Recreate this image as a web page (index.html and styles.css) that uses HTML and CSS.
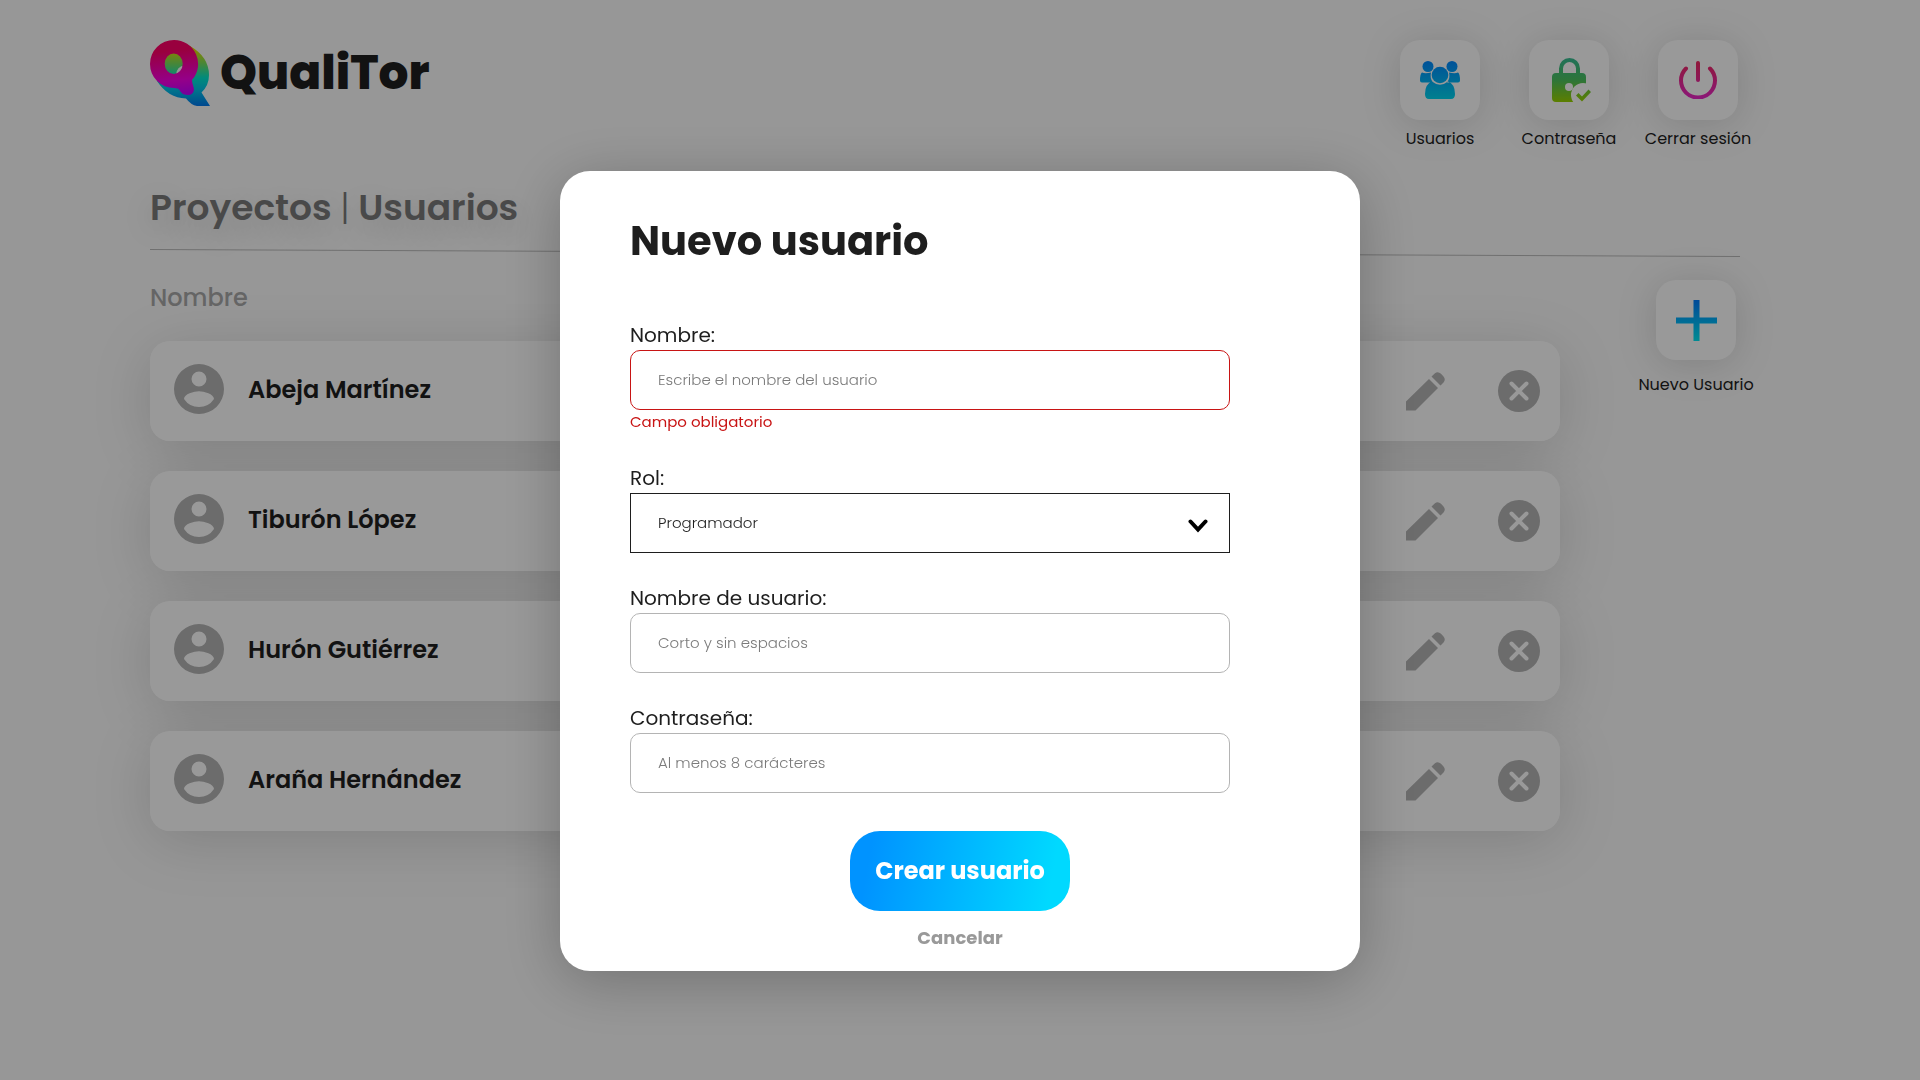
FILE: index.html
```html
<!DOCTYPE html>
<html lang="es">
<head>
<meta charset="utf-8">
<meta name="viewport" content="width=device-width, initial-scale=1">
<title>QualiTor | Nuevo usuario</title>
<link rel="stylesheet" href="styles.css">
</head>
<body>
<svg class="defs" width="0" height="0" aria-hidden="true">
  <defs>
    <linearGradient id="users-blue" gradientUnits="userSpaceOnUse" x1="0" y1="0" x2="0" y2="38"><stop offset="0" stop-color="#0088ff"/><stop offset="1" stop-color="#00d5ef"/></linearGradient>
    <linearGradient id="plus-blue" gradientUnits="userSpaceOnUse" x1="0" y1="0" x2="0" y2="41"><stop offset="0" stop-color="#007cff"/><stop offset="1" stop-color="#00e8f5"/></linearGradient>
    <linearGradient id="green" gradientUnits="userSpaceOnUse" x1="0" y1="0" x2="0" y2="44"><stop offset="0" stop-color="#38bd94"/><stop offset=".5" stop-color="#4cc360"/><stop offset="1" stop-color="#9ad300"/></linearGradient>
    <linearGradient id="pink" gradientUnits="userSpaceOnUse" x1="0" y1="0" x2="0" y2="38"><stop offset="0" stop-color="#ef2860"/><stop offset="1" stop-color="#e827c8"/></linearGradient>
    <linearGradient id="logo-front" gradientUnits="userSpaceOnUse" x1="20" y1="0" x2="26" y2="54"><stop offset=".2" stop-color="#ff0068"/><stop offset=".75" stop-color="#f800e4"/><stop offset="1" stop-color="#c800ff"/></linearGradient>
    <linearGradient id="logo-back" gradientUnits="userSpaceOnUse" x1="35" y1="10" x2="35" y2="66"><stop offset="0" stop-color="#e0e000"/><stop offset=".25" stop-color="#75e060"/><stop offset=".5" stop-color="#00e8d0"/><stop offset=".7" stop-color="#00c5e8"/><stop offset="1" stop-color="#0078ef"/></linearGradient>
    <symbol id="avatar" viewBox="2 2 20 20"><path fill-rule="evenodd" d="M12 2a10 10 0 1 0 0 20 10 10 0 0 0 0-20zm0 3a3 3 0 1 1 0 6 3 3 0 0 1 0-6zm0 14.200a7.200 7.200 0 0 1-6-3.200c0-2 4-3.100 6-3.100s6 1.100 6 3.100a7.200 7.200 0 0 1-6 3.200z"/></symbol>
    <symbol id="pencil" viewBox="0 0 39 39"><path d="M23 7 32 16 9.500 38.500H0V29.500zM25.500 4.500 29 1.200Q32-1 35 1.800L37.500 4.500Q40 7.500 37.500 10.500L34.500 13.500z"/></symbol>
    <symbol id="remove" viewBox="0 0 42 42"><circle cx="21" cy="21" r="21"/><path class="remove-cross" d="M13.500 13.500 28.500 28.500M28.500 13.500 13.500 28.500"/></symbol>
  </defs>
</svg>

<div class="page">
  <header class="header">
    <a class="logo" href="#">
      <svg width="60" height="66" viewBox="0 0 60 66" aria-hidden="true">
        <path fill="url(#logo-back)" fill-rule="evenodd" d="M40 6Q59 17 59 35A24 24 0 0 1 51.500 52.500L60 66H47Q41 65 36 58.500Q18 58 7 41L10 10zM34.500 25.500a8.500 9.500 0 1 0 0 19 8.500 9.500 0 0 0 0-19z"/>
        <path fill="url(#logo-front)" fill-rule="evenodd" d="M24 0A24 24 0 0 1 42 40Q42 43 43.500 47C45 52 42 55 38 55C32 55 31 52 29 49.500Q28 48 24 48A24 24 0 0 1 24 0zM23.700 13.400a9 10.300 0 1 0 0 20.600 9 10.300 0 0 0 0-20.600z"/>
      </svg>
      <span class="logo-name">QualiTor</span>
    </a>
    <nav class="nav">
      <a class="action" href="#">
        <span class="tile"><svg width="40" height="38" viewBox="0 0 40 38" fill="url(#users-blue)"><circle cx="8" cy="5.500" r="5.500"/><circle cx="32" cy="5.500" r="5.500"/><circle cx="20" cy="14" r="8.300"/><path d="M2 11.500Q5 13 11 11.500Q9.500 17 13 21.500H2Q0 21.500 0 19.500Q0 13 2 11.500zM38 11.500Q35 13 29 11.500Q30.500 17 27 21.500H38Q40 21.500 40 19.500Q40 13 38 11.500zM12 20.500Q20 27 28 20.500Q35 23 35 33Q35 38 31 38H9Q5 38 5 33Q5 23 12 20.500z"/></svg></span>
        <span class="action-label">Usuarios</span>
      </a>
      <a class="action" href="#">
        <span class="tile"><svg class="lock" width="34" height="44" viewBox="0 0 34 44" fill="url(#green)"><path fill-rule="evenodd" d="M7 15V10.500A10.500 10.500 0 0 1 28 10.500V15H30Q34 15 34 19V44H4Q0 44 0 40V19Q0 15 4 15zM11 15H24V10.500A6.500 6.500 0 0 0 11 10.500z"/><g class="lock-cut"><circle cx="17" cy="29" r="4"/><circle cx="31" cy="37" r="12"/></g><path d="M24 37.500 26.500 35 30 38.500 36.500 31.500 39 34 30 43.500z"/></svg></span>
        <span class="action-label">Contraseña</span>
      </a>
      <a class="action" href="#">
        <span class="tile"><svg width="38" height="38" viewBox="0 0 38 38" fill="none" stroke="url(#pink)" stroke-width="4" stroke-linecap="round"><path d="M19 2 19.010 19"/><path d="M7 7.500a17 17 0 1 0 24 0"/></svg></span>
        <span class="action-label">Cerrar sesión</span>
      </a>
    </nav>
  </header>

  <main>
    <h1 class="crumbs"><a href="#">Proyectos</a> <span class="bar">|</span> <a href="#">Usuarios</a></h1>
    <svg class="divider" viewBox="0 0 1590 8" preserveAspectRatio="none" aria-hidden="true"><path d="M0 .5 1590 7.500"/></svg>
    <div class="content">
      <table class="users">
        <thead><tr><th scope="col">Nombre</th></tr></thead>
        <tbody>
          <tr><td class="name"><svg width="50" height="50"><use href="#avatar"/></svg>Abeja Martínez</td><td class="tools"><button aria-label="Editar"><svg width="39" height="39"><use href="#pencil"/></svg></button><button aria-label="Eliminar"><svg width="42" height="42"><use href="#remove"/></svg></button></td></tr>
          <tr><td class="name"><svg width="50" height="50"><use href="#avatar"/></svg>Tiburón López</td><td class="tools"><button aria-label="Editar"><svg width="39" height="39"><use href="#pencil"/></svg></button><button aria-label="Eliminar"><svg width="42" height="42"><use href="#remove"/></svg></button></td></tr>
          <tr><td class="name"><svg width="50" height="50"><use href="#avatar"/></svg>Hurón Gutiérrez</td><td class="tools"><button aria-label="Editar"><svg width="39" height="39"><use href="#pencil"/></svg></button><button aria-label="Eliminar"><svg width="42" height="42"><use href="#remove"/></svg></button></td></tr>
          <tr><td class="name"><svg width="50" height="50"><use href="#avatar"/></svg>Araña Hernández</td><td class="tools"><button aria-label="Editar"><svg width="39" height="39"><use href="#pencil"/></svg></button><button aria-label="Eliminar"><svg width="42" height="42"><use href="#remove"/></svg></button></td></tr>
        </tbody>
      </table>
      <a class="action action-new" href="#">
        <span class="tile"><svg width="41" height="41" viewBox="0 0 41 41" fill="url(#plus-blue)"><path d="M17.500 0h6v17.500H41v6H23.500V41h-6V23.500H0v-6h17.500z"/></svg></span>
        <span class="action-label">Nuevo Usuario</span>
      </a>
    </div>
  </main>
</div>

<div class="overlay">
  <form class="modal" role="dialog" aria-labelledby="modal-title" novalidate>
    <h2 id="modal-title" class="modal-title">Nuevo usuario</h2>
    <div class="fields">
      <div class="field invalid">
        <label for="nombre">Nombre:</label>
        <input id="nombre" type="text" placeholder="Escribe el nombre del usuario" aria-describedby="nombre-error">
        <p id="nombre-error" class="error">Campo obligatorio</p>
      </div>
      <div class="field">
        <label for="rol">Rol:</label>
        <div class="select">
          <select id="rol"><option>Programador</option></select>
          <svg class="chevron" width="20" height="14" viewBox="0 0 20 14" aria-hidden="true"><path d="M2.500 2.500 10 10.500 17.500 2.500"/></svg>
        </div>
      </div>
      <div class="field">
        <label for="usuario">Nombre de usuario:</label>
        <input id="usuario" type="text" placeholder="Corto y sin espacios">
      </div>
      <div class="field">
        <label for="clave">Contraseña:</label>
        <input id="clave" type="password" placeholder="Al menos 8 carácteres">
      </div>
    </div>
    <div class="buttons">
      <button class="submit" type="submit">Crear usuario</button>
      <button class="cancel" type="button">Cancelar</button>
    </div>
  </form>
</div>
</body>
</html>
```
FILE: styles.css
```css
* { box-sizing: border-box; }

body {
  margin: 0;
  background: #fcfcfc;
  color: #1e1e1e;
  font-family: Poppins, Inter, "Open Sans", sans-serif;
}

a { color: inherit; text-decoration: none; }
button { padding: 0; border: 0; background: none; font: inherit; cursor: pointer; }
svg { display: block; flex: none; }
.defs { position: absolute; }

.page { min-height: 100vh; padding: 40px 180px 80px 150px; }

.header { display: flex; justify-content: space-between; align-items: flex-start; }
.logo { display: flex; align-items: center; gap: 10px; }
.logo-name { font-size: 47px; line-height: 64px; font-weight: 800; }

.nav { display: grid; grid-template-columns: repeat(3, 80px); gap: 49px; padding-right: 2px; }
.action { display: flex; flex-direction: column; align-items: center; width: 80px; }
.action-label { margin-top: 7px; font-size: 16px; line-height: 24px; white-space: nowrap; }
.tile {
  display: flex;
  align-items: center;
  justify-content: center;
  width: 80px;
  height: 80px;
  border-radius: 20px;
  background: #fff;
  box-shadow: 0 4px 40px rgba(0, 0, 0, .15);
}
.lock { overflow: visible; }
.lock-cut { fill: #fff; }

.crumbs {
  margin: 32px 0 0;
  color: #7b7b7b;
  font-size: 36px;
  line-height: 50px;
  font-weight: 600;
  text-shadow: 0 10px 30px rgba(0, 0, 0, .2);
}
.bar { font-weight: 300; }
.divider { width: 100%; height: 8px; margin-top: 16px; fill: none; stroke: #bababa; stroke-width: 1; }

.content { display: flex; justify-content: space-between; padding-top: 23px; }
.users { display: block; flex: 1; max-width: 1410px; border-collapse: collapse; isolation: isolate; }
.users thead, .users thead tr, .users th { display: block; }
.users th { padding: 0; color: #a9a9a9; font-size: 24px; line-height: 36px; font-weight: 500; text-align: left; }
.users tbody { display: grid; gap: 30px; margin-top: 25px; }
.users tbody tr {
  position: relative;
  display: flex;
  align-items: center;
  justify-content: space-between;
  height: 100px;
  padding: 0 20px 0 24px;
  border-radius: 20px;
  background: #fff;
}
.users tbody tr::before {
  content: "";
  position: absolute;
  inset: 0;
  z-index: -1;
  border-radius: 20px;
  box-shadow: 0 10px 60px rgba(0, 0, 0, .15);
}
.users td { display: flex; align-items: center; padding: 0; fill: #b4b4b4; }
.users .name { gap: 24px; padding-bottom: 4px; font-size: 24px; font-weight: 600; }
.tools { gap: 53px; }
.remove-cross { fill: none; stroke: #fff; stroke-width: 4; stroke-linecap: round; }

.action-new { margin-right: 4px; }
.action-new .action-label { margin-top: 13px; }

.overlay {
  position: fixed;
  inset: 0;
  display: flex;
  align-items: flex-start;
  justify-content: center;
  padding: 171px 20px 20px;
  overflow: auto;
  background: rgba(0, 0, 0, .4);
}
.modal {
  width: 100%;
  max-width: 800px;
  padding: 40px 130px 20px 70px;
  border-radius: 30px;
  background: #fff;
  box-shadow: 0 10px 60px rgba(0, 0, 0, .25);
}
.modal-title { margin: 0; font-size: 40px; line-height: 60px; font-weight: 700; }
.fields { display: grid; gap: 30px; margin-top: 49px; }
.field label { display: block; font-size: 20px; line-height: 30px; }
.field input, .field select {
  display: block;
  width: 100%;
  height: 60px;
  padding: 0 27px 2px;
  border: 1px solid #b4b4b4;
  border-radius: 10px;
  background: #fff;
  color: #1e1e1e;
  font: 300 15px Poppins, Inter, "Open Sans", sans-serif;
}
.field input::placeholder { color: #7b7b7b; opacity: 1; }
.field select { appearance: none; border-color: #1e1e1e; border-radius: 0; }
.select { position: relative; }
.chevron {
  position: absolute;
  top: 26px;
  right: 22px;
  fill: none;
  stroke: #000;
  stroke-width: 4;
  stroke-linecap: round;
  pointer-events: none;
}
.field.invalid input { border-color: #c81414; }
.error { margin: 0; color: #c81414; font-size: 15px; line-height: 23px; }

.buttons { display: flex; flex-direction: column; align-items: center; margin: 38px -60px 0 0; }
.submit {
  width: 220px;
  height: 80px;
  padding-bottom: 2px;
  border-radius: 30px;
  background: linear-gradient(100deg, #0093ff 10%, #00d9ff 90%);
  color: #fff;
  font-size: 24px;
  font-weight: 700;
}
.cancel { margin-top: 13px; color: #999; font-size: 18px; line-height: 27px; font-weight: 700; }
```
